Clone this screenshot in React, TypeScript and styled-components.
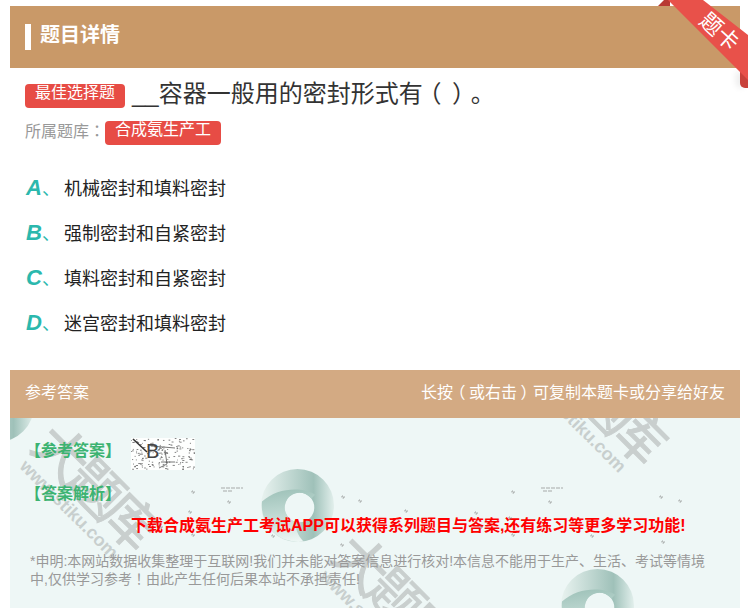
import styled, { createGlobalStyle } from "styled-components"

const GlobalStyle = createGlobalStyle`
    html, body {
        margin: 0;
        padding: 0;
        background: #fff;
        font-family: "Liberation Sans", "Noto Sans CJK SC", sans-serif;
        text-spacing-trim: space-all;
    }
    body {
        height: 608px;
        overflow: hidden;
    }
`

const options = [
    { key: "A", text: "机械密封和填料密封" },
    { key: "B", text: "强制密封和自紧密封" },
    { key: "C", text: "填料密封和自紧密封" },
    { key: "D", text: "迷宫密封和填料密封" },
]

const specks = [
    [193, 492], [229, 502], [190, 512], [231, 520], [161, 527], [193, 535], [273, 536], [343, 497], [360, 501], [342, 545],
    [513, 492], [550, 502], [406, 511], [476, 513], [510, 518], [481, 527], [513, 535], [592, 536], [661, 497], [680, 501], [663, 542],
]

const hash = (n: number) => {
    const v = Math.sin(n * 12.9898) * 43758.5453
    return v - Math.floor(v)
}

// scanned noise behind the answer letter
const noise = Array.from({ length: 170 }, (_, i) => ({
    x: hash(i + 1) * 63,
    y: hash(i + 500) * 31,
    w: 0.7 + hash(i + 900) * 1.6,
}))

const Swirl = ({ size, className }: { size: number; className?: string }) => (
    <svg className={className} width={size} height={size} viewBox="0 0 76 76">
        <defs>
            <linearGradient id="swirlRing" x1="0" y1="0" x2="1" y2="0">
                <stop offset="0" stopColor="#e9f3f0" />
                <stop offset="0.72" stopColor="#9fc1b9" />
                <stop offset="1" stopColor="#e2efec" />
            </linearGradient>
            <linearGradient id="swirlBand" x1="0.4" y1="0" x2="0.5" y2="1">
                <stop offset="0" stopColor="#a0c3ba" />
                <stop offset="0.5" stopColor="#c2dbd5" />
                <stop offset="1" stopColor="#edf6f4" />
            </linearGradient>
        </defs>
        <path
            fillRule="evenodd"
            fill="url(#swirlRing)"
            d="M38 1A37 37 0 1 1 38 75A37 37 0 1 1 38 1ZM40 25A15 15 0 1 0 40 55A15 15 0 1 0 40 25Z"
        />
        <path
            fill="url(#swirlBand)"
            d="M56 27C44 19 18 19 2 34A37 37 0 0 0 44 74.5C38 68 36 62 36 54.5A15 15 0 1 1 52 31L56 27Z"
        />
    </svg>
)

export default function App() {
    return (
        <Page>
            <GlobalStyle />
            <Card>
                <TitleBar>
                    <TitleMark />
                    <TitleText>题目详情</TitleText>
                </TitleBar>
                <Ribbon>
                    <RibbonFold />
                    <RibbonTail />
                    <RibbonBand />
                    <RibbonLabel>题卡</RibbonLabel>
                </Ribbon>

                <Question>
                    <QuestionTag>最佳选择题</QuestionTag>
                    <QuestionText>
                        __容器一般用的密封形式有<OpenParen>（</OpenParen><CloseParen>）</CloseParen>。
                    </QuestionText>
                </Question>
                <Source>
                    <SourceLabel>
                        所属题库<Punct>：</Punct>
                    </SourceLabel>
                    <Tag>合成氨生产工</Tag>
                </Source>

                <Options>
                    {options.map(o => (
                        <Option key={o.key}>
                            <OptionKey>
                                <em>{o.key}</em>、
                            </OptionKey>
                            <span>{o.text}</span>
                        </Option>
                    ))}
                </Options>

                <AnswerBar>
                    <span>参考答案</span>
                    <span>
                        长按<OpenParen>（</OpenParen>或右击<CloseParen>）</CloseParen>可复制本题卡或分享给好友
                    </span>
                </AnswerBar>

                <AnswerBody>
                    <Backdrop aria-hidden="true">
                        <Swirl size={75} className="one" />
                        <Swirl size={75} className="two" />
                        <Swirl size={75} className="three" />
                        <Mark $x={50} $y={-1}>大题库</Mark>
                        <MarkUrl $x={20} $y={38}>www.stiku.com</MarkUrl>
                        <Mark $x={350} $y={109}>大题库</Mark>
                        <MarkUrl $x={320} $y={148}>www.stiku.com</MarkUrl>
                        <Mark $x={558} $y={-87}>大题库</Mark>
                        <MarkUrl $x={528} $y={-48}>www.stiku.com</MarkUrl>
                    </Backdrop>

                    <Foreground>
                        <AnswerRow>
                            <GreenLabel>【参考答案】</GreenLabel>
                            <NoisyAnswer>
                                <svg width="64" height="32" viewBox="0 0 64 32">
                                    {noise.map((n, i) => (
                                        <rect key={i} x={n.x} y={n.y} width={n.w} height="0.8" fill="#666" />
                                    ))}
                                    <path d="M2 1L16 14" stroke="#333" strokeWidth="1.6" />
                                    <path d="M34 12L36 26L28 30M30 24H44M20 8L44 10" fill="none" stroke="#555" strokeWidth="0.8" />
                                </svg>
                                <b>B</b>
                            </NoisyAnswer>
                        </AnswerRow>
                        <GreenLabel>【答案解析】</GreenLabel>
                        <Promo>下载合成氨生产工考试APP可以获得系列题目与答案,还有练习等更多学习功能!</Promo>
                        <Disclaimer>
                            *申明:本网站数据收集整理于互联网!我们并未能对答案信息进行核对!本信息不能用于生产、生活、考试等情境中,仅供学习参考<Punct>！</Punct>由此产生任何后果本站不承担责任!
                        </Disclaimer>
                    </Foreground>

                    <Specks aria-hidden="true" width="730" height="190" viewBox="10 418 730 190">
                        {specks.map(([x, y]) => (
                            <circle key={`${x}-${y}`} cx={x} cy={y} r="1.2" fill="none" stroke="#777" strokeWidth="0.7" strokeDasharray="2 1" />
                        ))}
                        <path d="M221 488H243M223 491H232M541 488H563M543 491H552" stroke="#888" strokeWidth="0.7" strokeDasharray="4 1" />
                    </Specks>
                </AnswerBody>
            </Card>
        </Page>
    )
}

const Page = styled.div`
    width: 750px;
    height: 608px;
    padding: 6px 10px 0;
    box-sizing: border-box;
    overflow: hidden;
`

const Card = styled.div`
    position: relative;
    width: 730px;
`

const TitleBar = styled.div`
    display: flex;
    align-items: center;
    gap: 9px;
    height: 62px;
    padding: 0 15px;
    background: #c99968;
`

const TitleMark = styled.div`
    width: 6px;
    height: 26px;
    background: #fff;
`

const TitleText = styled.h1`
    margin: 0 0 7px;
    font-size: 20px;
    font-weight: 700;
    color: #fff;
`

const Ribbon = styled.div`
    position: absolute;
    top: -6px;
    right: -10px;
    width: 92px;
    height: 96px;
    overflow: hidden;
`

const RibbonFold = styled.div`
    position: absolute;
    top: 0;
    left: 0;
    width: 12px;
    height: 6px;
    background: #b83a33;
    clip-path: polygon(50% 0, 100% 0, 100% 100%, 0 100%);
`

const RibbonTail = styled.div`
    position: absolute;
    right: 2px;
    top: 72px;
    width: 8px;
    height: 16px;
    background: #c8423b;
    border-radius: 0 0 0 5px;
    box-shadow: -4px 0 6px rgba(0, 0, 0, 0.08);
`

const RibbonBand = styled.div`
    position: absolute;
    top: 0;
    left: 0;
    width: 90px;
    height: 80px;
    background: #e8514a;
    clip-path: polygon(10px 0, 45px 0, 90px 35px, 90px 80px);
`

const RibbonLabel = styled.span`
    position: absolute;
    left: 39px;
    top: 21px;
    font-size: 22px;
    line-height: 22px;
    color: #fff;
    transform: rotate(42deg);
    white-space: nowrap;
`

const Question = styled.div`
    display: flex;
    align-items: flex-start;
    gap: 7px;
    height: 36px;
    margin-top: 8px;
    padding: 0 15px;
`

const Tag = styled.span`
    display: inline-block;
    height: 24px;
    padding: 0 10px;
    border-radius: 4px;
    background: #e74c45;
    color: #fff;
    font-size: 16px;
    line-height: 18px;
`

const QuestionTag = styled(Tag)`
    margin-top: 8px;
`

const QuestionText = styled.h2`
    margin: 0;
    font-size: 24px;
    line-height: 36px;
    font-weight: 400;
    color: #333;
`

// this punctuation sits centred in its cell, as the traditional cut has it
const Punct = styled.span`
    font-family: "Noto Sans CJK TC", sans-serif;
    line-height: 0;
`

const OpenParen = styled.span`
    margin: 0 0.22em 0 -0.22em;
`

const CloseParen = styled.span`
    margin: 0 -0.22em 0 0.22em;
`

const Source = styled.div`
    display: flex;
    align-items: center;
    height: 24px;
    margin-top: 9px;
    padding: 0 15px;
`

const SourceLabel = styled.span`
    margin-bottom: 3px;
    font-size: 16px;
    line-height: 18px;
    color: #999;
`

const Options = styled.ul`
    display: flex;
    flex-direction: column;
    gap: 15px;
    margin: 27px 0 0;
    padding: 0 16px;
    list-style: none;
`

const Option = styled.li`
    display: flex;
    align-items: center;
    height: 30px;
    font-size: 18px;
    color: #222;
`

const OptionKey = styled.span`
    width: 38px;
    font-size: 18px;
    color: #2bb8ad;
    em {
        font-size: 22px;
        font-weight: 700;
        font-style: italic;
    }
`

const AnswerBar = styled.div`
    display: flex;
    align-items: center;
    justify-content: space-between;
    height: 48px;
    box-sizing: border-box;
    margin-top: 33px;
    padding: 0 15px 6px;
    background: #d3aa83;
    color: #fff;
    font-size: 16px;
`

const AnswerBody = styled.div`
    position: relative;
    height: 190px;
    overflow: hidden;
    background: #eef7f6;
`

const Backdrop = styled.div`
    position: absolute;
    inset: 0;
    svg {
        position: absolute;
    }
    .one {
        left: -50px;
        top: -50px;
    }
    .two {
        left: 250px;
        top: 50px;
    }
    .three {
        left: 550px;
        top: 150px;
    }
`

const Mark = styled.span<{ $x: number; $y: number }>`
    position: absolute;
    left: ${p => p.$x}px;
    top: ${p => p.$y}px;
    font-size: 54px;
    line-height: 50px;
    letter-spacing: -6px;
    color: #c9cfce;
    -webkit-text-stroke: 1px #c9cfce;
    white-space: nowrap;
    transform: rotate(45deg);
    transform-origin: left top;
`

const MarkUrl = styled.span<{ $x: number; $y: number }>`
    position: absolute;
    left: ${p => p.$x}px;
    top: ${p => p.$y}px;
    font-size: 18px;
    font-weight: 700;
    line-height: 20px;
    color: #c8cfce;
    white-space: nowrap;
    transform: rotate(45deg);
    transform-origin: left top;
`

const Foreground = styled.div`
    position: relative;
    display: flex;
    flex-direction: column;
    padding: 20px 15px 0;
`

const AnswerRow = styled.div`
    display: flex;
    align-items: center;
    gap: 10px;
    height: 32px;
    margin-bottom: 13px;
`

const GreenLabel = styled.span`
    font-size: 16px;
    line-height: 22px;
    font-weight: 700;
    color: #3cb371;
    ${AnswerRow} > & {
        margin-bottom: 6px;
    }
`

const NoisyAnswer = styled.div`
    position: relative;
    width: 64px;
    height: 32px;
    background: rgba(255, 255, 255, 0.9);
    svg {
        position: absolute;
        inset: 0;
    }
    b {
        position: absolute;
        left: 15px;
        top: 2px;
        font-size: 20px;
        font-weight: 400;
        color: #444;
    }
`

const Promo = styled.div`
    margin: 10px 0 0 106px;
    white-space: nowrap;
    font-size: 16px;
    line-height: 22px;
    font-weight: 700;
    color: #f00;
`

const Disclaimer = styled.p`
    margin: 15px 15px 0 5px;
    font-size: 14px;
    line-height: 18px;
    color: #999;
`

const Specks = styled.svg`
    position: absolute;
    inset: 0;
`
